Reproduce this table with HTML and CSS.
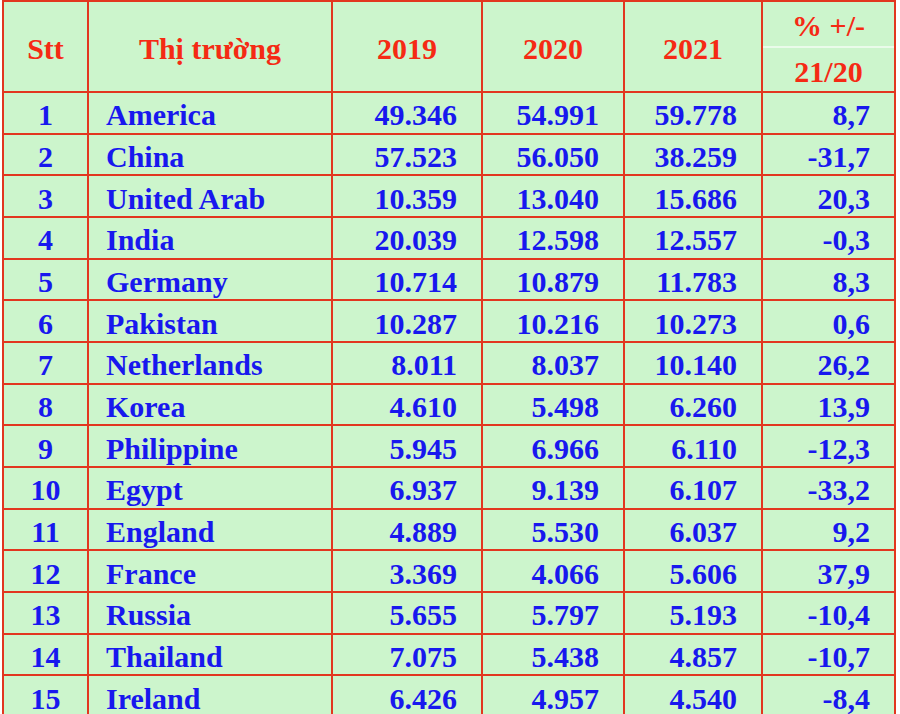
FILE: index.html
```html
<!DOCTYPE html>
<html lang="vi">
<head>
<meta charset="utf-8">
<link rel="stylesheet" href="styles.css">
</head>
<body>
<div class="table">
  <div class="cell head">Stt</div>
  <div class="cell head">Thị trường</div>
  <div class="cell head">2019</div>
  <div class="cell head">2020</div>
  <div class="cell head">2021</div>
  <div class="cell head split"><div class="half top">% +/-</div><div class="half">21/20</div></div>

  <div class="cell no">1</div><div class="cell name">America</div><div class="cell num">49.346</div><div class="cell num">54.991</div><div class="cell num">59.778</div><div class="cell num">8,7</div>
  <div class="cell no">2</div><div class="cell name">China</div><div class="cell num">57.523</div><div class="cell num">56.050</div><div class="cell num">38.259</div><div class="cell num">-31,7</div>
  <div class="cell no">3</div><div class="cell name">United Arab</div><div class="cell num">10.359</div><div class="cell num">13.040</div><div class="cell num">15.686</div><div class="cell num">20,3</div>
  <div class="cell no">4</div><div class="cell name">India</div><div class="cell num">20.039</div><div class="cell num">12.598</div><div class="cell num">12.557</div><div class="cell num">-0,3</div>
  <div class="cell no">5</div><div class="cell name">Germany</div><div class="cell num">10.714</div><div class="cell num">10.879</div><div class="cell num">11.783</div><div class="cell num">8,3</div>
  <div class="cell no">6</div><div class="cell name">Pakistan</div><div class="cell num">10.287</div><div class="cell num">10.216</div><div class="cell num">10.273</div><div class="cell num">0,6</div>
  <div class="cell no">7</div><div class="cell name">Netherlands</div><div class="cell num">8.011</div><div class="cell num">8.037</div><div class="cell num">10.140</div><div class="cell num">26,2</div>
  <div class="cell no">8</div><div class="cell name">Korea</div><div class="cell num">4.610</div><div class="cell num">5.498</div><div class="cell num">6.260</div><div class="cell num">13,9</div>
  <div class="cell no">9</div><div class="cell name">Philippine</div><div class="cell num">5.945</div><div class="cell num">6.966</div><div class="cell num">6.110</div><div class="cell num">-12,3</div>
  <div class="cell no">10</div><div class="cell name">Egypt</div><div class="cell num">6.937</div><div class="cell num">9.139</div><div class="cell num">6.107</div><div class="cell num">-33,2</div>
  <div class="cell no">11</div><div class="cell name">England</div><div class="cell num">4.889</div><div class="cell num">5.530</div><div class="cell num">6.037</div><div class="cell num">9,2</div>
  <div class="cell no">12</div><div class="cell name">France</div><div class="cell num">3.369</div><div class="cell num">4.066</div><div class="cell num">5.606</div><div class="cell num">37,9</div>
  <div class="cell no">13</div><div class="cell name">Russia</div><div class="cell num">5.655</div><div class="cell num">5.797</div><div class="cell num">5.193</div><div class="cell num">-10,4</div>
  <div class="cell no">14</div><div class="cell name">Thailand</div><div class="cell num">7.075</div><div class="cell num">5.438</div><div class="cell num">4.857</div><div class="cell num">-10,7</div>
  <div class="cell no">15</div><div class="cell name">Ireland</div><div class="cell num">6.426</div><div class="cell num">4.957</div><div class="cell num">4.540</div><div class="cell num">-8,4</div>
</div>
</body>
</html>
```
FILE: styles.css
```css
html, body {
  margin: 0;
  padding: 0;
  background: #ffffff;
  overflow: hidden;
}
body {
  padding-left: 2px;
}
.table {
  display: grid;
  grid-template-columns: 83px 242px 148px 140px 136px 131px;
  grid-template-rows: 89px;
  grid-auto-rows: 39.67px;
  gap: 2px;
  padding: 2px;
  width: max-content;
  background: #e2361f;
  font-family: "Liberation Serif", "Times New Roman", serif;
  font-weight: bold;
  font-size: 30px;
}
.cell {
  box-sizing: border-box;
  background: #ccf5cc;
  display: flex;
  align-items: center;
  color: #1818ee;
  white-space: nowrap;
  padding-top: 5px;
}
.head {
  color: #f52a14;
  justify-content: center;
  padding-top: 4px;
}
.split {
  flex-direction: column;
  align-items: stretch;
  padding-top: 0;
}
.half {
  flex: 1;
  display: flex;
  align-items: center;
  justify-content: center;
  padding-top: 5px;
}
.half.top {
  border-bottom: 2px solid #eafbea;
}
.no {
  justify-content: center;
}
.name {
  padding-left: 17px;
}
.num {
  justify-content: flex-end;
  padding-right: 24px;
}
```
